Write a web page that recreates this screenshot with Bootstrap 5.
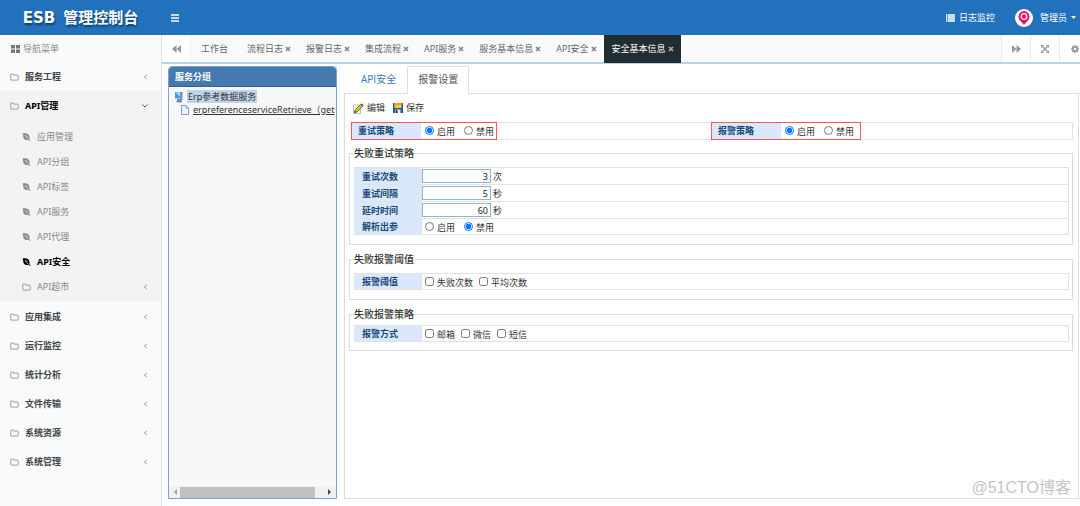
<!DOCTYPE html>
<html lang="zh-CN">
<head>
<meta charset="utf-8">
<meta name="viewport" content="width=device-width, initial-scale=1">
<title>ESB 管理控制台</title>
<link href="https://cdn.jsdelivr.net/npm/bootstrap@5.3.0/dist/css/bootstrap.min.css" rel="stylesheet">
<style>
body{font-family:"Noto Sans","Noto Sans CJK SC",sans-serif;font-size:9px;line-height:16px;color:#333;background:#fff}
a{text-decoration:none;color:inherit}
button{color:inherit}
svg{flex:none;display:block}
.topbar{height:35px;background:#2271bc;color:#fff}
.brand{width:161px;gap:8px;font-family:"DejaVu Sans","Noto Sans CJK SC",sans-serif;font-size:15px;font-weight:700;text-shadow:1px 2px 2px rgba(0,0,0,.45)}
.plain{border:0;background:none;padding:0;font-size:9px;line-height:16px}
.menu-toggle{margin-left:10px}
.user-tools{gap:20px;padding-right:4px}
.user-menu{gap:7px}
.avatar{width:18px;height:18px;background:#fff}
.sidebar{width:162px;background:#f9fafc;border-right:1px solid #dfe2ec;color:#777}
.side-title{height:27px;padding-left:11px;gap:3px;font-size:9px;color:#888}
.side-link{height:29px;padding:0 13px 0 10px;gap:6px;color:#444;font-weight:700}
.side-link.open{color:#000}
.side-link svg,.sub-link svg{color:#888}
.side-group{background:#f3f3f3;padding-bottom:3px}
.side-group ul{padding-top:4px}
.sub-link{height:25px;padding:0 13px 0 22px;gap:6px;color:#888}
.sub-link.current,.sub-link.current svg{color:#000;font-weight:700}
.page-tabs{height:29px;background:#fafafa;border-bottom:2px solid #b9d2ea;color:#777}
.square{width:29px;background:#fff;border:0;border-right:1px solid #eee;color:#999;padding:0}
.tools .square{border-right:0;border-left:1px solid #eaeaea}
.tools .square:last-child{width:21px;padding-left:11px}
.page-tab{padding:0 7px 0 8px;color:#666;gap:2px}
.page-tab.first{padding:0 11px 0 10px}
.page-tab.current{background:#222d32;color:#fff;margin-bottom:-1px}
.page-tab button{color:#888}
.page-tab.current button{color:#aaa}
.workspace{padding:2px 1px 7px 6px;gap:7px}
.tree{width:169px;border:1px solid #7fa3cc;border-radius:4px 4px 0 0;background:#f8f8f8}
.tree-head{height:20px;background:#4679ad;border-bottom:1px solid #2f6197;border-radius:3px 3px 0 0;color:#fff;font-weight:700;padding:2px 6px}
.tree-body{padding:3px 0 0 5px;font-size:9px;line-height:13px}
.tree-body span.picked{background:#bfd2ee;padding:0 1px}
.leaf-row{padding-left:7px}
.leaf-row a{text-decoration:underline;white-space:nowrap}
.scroller{height:12px;background:#f1f1f1;padding:0 4px;gap:2px}
.thumb{background:#c1c1c1;width:135px;height:11px}
.main-tabs{height:27px;border:0;font-size:10px;padding-left:6px;position:relative;font-family:"Open Sans","Noto Sans CJK SC",sans-serif}
.main-tabs .nav-link{height:27px;padding:3px 10px;margin:0;color:#337ab7;line-height:18px;border-radius:2px 2px 0 0;border:1px solid transparent;border-bottom:0}
.main-tabs .nav-link.active{border-color:#ddd;color:#555;background:#fff;height:28px;z-index:1;position:relative}
.panel-box{border:1px solid #ddd;padding:6px 5px 0 5px}
.toolrow{gap:8px;height:16px;padding-left:3px}
.toolrow button{gap:3px;font-size:9px}
.policy{border:1px solid #e2e2e2;margin:6px 0 5px 1px;height:18px}
.policy .framed{border:1px solid #f55;height:18px;margin:-1px 0 0 -1px;display:inline-flex;padding-right:2px}
.policy .framed.wide{padding-right:6px}
.name{background:#d9e8fd;color:#194877;font-weight:700}
.policy .name{width:69px;padding-left:6px}
.opts{gap:3px;padding-left:4px;display:flex;align-items:center;height:15px}
.opts label{padding-top:2px;line-height:14px}
.opts input[type=radio]+label{margin-right:6px}
.opts input[type=checkbox]+label{margin-right:3px}
.opts input{width:9px;height:9px;margin:0}
.policy .opts label:last-child{margin-right:0}
fieldset.grp{border:1px solid #ddd;padding:6px 3px 9px 4px;margin:0 0 6px -1px}
fieldset.grp.tight{padding-top:3px;padding-bottom:8px}
fieldset.grp legend{float:none;width:auto;font-size:10px;font-weight:500;line-height:16px;padding:0;margin:0;color:#333}
.frm{width:100%;border-collapse:collapse}
.frm th,.frm td{border:1px solid #e2e2e2;padding:0;height:16px;line-height:15px}
.frm th{width:67px;padding-left:7px;border-left-color:#d9e8fd}
.frm .opts{padding-left:3px}
.numline{display:flex;align-items:center;gap:2px;height:16px}
.numline input{width:69px;height:14px;border:1px solid #8fb8d0;padding:0 2px;text-align:right;font-size:9px;line-height:12px;color:#222}
.watermark{position:absolute;right:9px;bottom:8px;font:16px/20px "Liberation Sans","Noto Sans CJK SC",sans-serif;color:#c4c4c4}
</style>
</head>
<body>
<svg width="0" height="0" class="position-absolute" aria-hidden="true">
<symbol id="folder" viewBox="0 0 18 16"><path d="M1.500 13V3.200Q1.500 2 2.700 2h3.600q1.200 0 1.200 1.200v1h7.800q1.200 0 1.200 1.200V13q0 1.200-1.200 1.200H2.700Q1.500 14.200 1.500 13z" fill="none" stroke="currentColor" stroke-width="1.600"/></symbol>
<symbol id="leaf" viewBox="0 0 16 16"><path d="M0 1C5 .3 11 .8 13 4.500c1.300 2.500 1 5.500.8 8L16 15l-1 1-2.500-2C7 14.500 3 13 1.800 9 1 6 2 3.500 0 1z" fill="currentColor"/><path d="M5 4Q7 9.500 12 12.500M8.500 4.500l1 4" stroke="#f3f3f3" stroke-width="1.200" fill="none"/></symbol>
<symbol id="left" viewBox="0 0 8 12"><path d="M6 2.500 2.500 6 6 9.500" fill="none" stroke="currentColor" stroke-width="1.500"/></symbol>
<symbol id="cross" viewBox="0 0 12 12"><path d="m2 2 8 8m0-8-8 8" stroke="currentColor" stroke-width="3.400"/></symbol>
<symbol id="rewind" viewBox="0 0 16 14"><path d="M8 0v14L0 7zM16 0v14L8 7z" fill="currentColor"/></symbol>
</svg>
<div class="d-flex flex-column min-vh-100 position-relative overflow-hidden">
<header class="topbar d-flex align-items-center">
  <a href="#" class="brand d-flex justify-content-center"><span>ESB</span><span>管理控制台</span></a>
  <button class="plain menu-toggle" aria-label="菜单"><svg width="9" height="8" viewBox="0 0 9 8"><path d="M0 1h8M0 4h8M0 7h8" stroke="#fff" stroke-width="1.300"/></svg></button>
  <div class="user-tools ms-auto d-flex align-items-center">
    <a href="#" class="d-flex align-items-center gap-1"><svg width="9" height="8" viewBox="0 0 9 8"><path d="M0 1h1.500M0 3h1.500M0 5h1.500M0 7h1.500M2 1h7M2 3h7M2 5h7M2 7h7" stroke="#fff" stroke-width="1.300"/></svg><span>日志监控</span></a>
    <div class="user-menu d-flex align-items-center">
    <span class="avatar rounded-circle d-flex align-items-center justify-content-center"><svg width="12" height="14" viewBox="0 0 12 14"><path d="M6 0a5.600 5.600 0 0 1 5.600 5.600C11.600 9 8 11.500 6 14 4 11.500.4 9 .4 5.600A5.600 5.600 0 0 1 6 0z" fill="#f0136b"/><circle cx="6" cy="5.500" r="2.800" fill="none" stroke="#fff" stroke-width="1.200"/></svg></span>
    <button class="plain d-flex align-items-center text-white">管理员<svg class="ms-1" width="5" height="3" viewBox="0 0 5 3"><path d="M0 0h5L2.500 3z" fill="#fff"/></svg></button>
    </div>
  </div>
</header>
<div class="d-flex flex-grow-1">
  <nav class="sidebar flex-shrink-0">
    <div class="side-title d-flex align-items-center"><svg width="9" height="8" viewBox="0 0 9 8"><path d="M0 0h4v3.500H0zM5 0h4v3.500H5zM0 4.500h4V8H0zM5 4.500h4V8H5z" fill="#777"/></svg>导航菜单</div>
    <a href="#" class="side-link d-flex align-items-center"><svg width="9" height="8"><use href="#folder"/></svg>服务工程<svg class="ms-auto" width="5" height="8"><use href="#left"/></svg></a>
    <div class="side-group">
      <a href="#" class="side-link open d-flex align-items-center"><svg width="9" height="8"><use href="#folder"/></svg>API管理<svg class="ms-auto" width="6" height="4" viewBox="0 0 6 4"><path d="m.5.5 2.500 2.500L5.500.5" fill="none" stroke="#555"/></svg></a>
      <ul class="list-unstyled mb-0">
        <li><a href="#" class="sub-link d-flex align-items-center"><svg width="9" height="8"><use href="#leaf"/></svg>应用管理</a></li>
        <li><a href="#" class="sub-link d-flex align-items-center"><svg width="9" height="8"><use href="#leaf"/></svg>API分组</a></li>
        <li><a href="#" class="sub-link d-flex align-items-center"><svg width="9" height="8"><use href="#leaf"/></svg>API标签</a></li>
        <li><a href="#" class="sub-link d-flex align-items-center"><svg width="9" height="8"><use href="#leaf"/></svg>API服务</a></li>
        <li><a href="#" class="sub-link d-flex align-items-center"><svg width="9" height="8"><use href="#leaf"/></svg>API代理</a></li>
        <li><a href="#" class="sub-link current d-flex align-items-center"><svg width="9" height="8"><use href="#leaf"/></svg>API安全</a></li>
        <li><a href="#" class="sub-link d-flex align-items-center"><svg width="9" height="8"><use href="#folder"/></svg>API超市<svg class="ms-auto" width="5" height="8"><use href="#left"/></svg></a></li>
      </ul>
    </div>
    <a href="#" class="side-link d-flex align-items-center"><svg width="9" height="8"><use href="#folder"/></svg>应用集成<svg class="ms-auto" width="5" height="8"><use href="#left"/></svg></a>
    <a href="#" class="side-link d-flex align-items-center"><svg width="9" height="8"><use href="#folder"/></svg>运行监控<svg class="ms-auto" width="5" height="8"><use href="#left"/></svg></a>
    <a href="#" class="side-link d-flex align-items-center"><svg width="9" height="8"><use href="#folder"/></svg>统计分析<svg class="ms-auto" width="5" height="8"><use href="#left"/></svg></a>
    <a href="#" class="side-link d-flex align-items-center"><svg width="9" height="8"><use href="#folder"/></svg>文件传输<svg class="ms-auto" width="5" height="8"><use href="#left"/></svg></a>
    <a href="#" class="side-link d-flex align-items-center"><svg width="9" height="8"><use href="#folder"/></svg>系统资源<svg class="ms-auto" width="5" height="8"><use href="#left"/></svg></a>
    <a href="#" class="side-link d-flex align-items-center"><svg width="9" height="8"><use href="#folder"/></svg>系统管理<svg class="ms-auto" width="5" height="8"><use href="#left"/></svg></a>
  </nav>
  <div class="d-flex flex-column flex-fill overflow-hidden">
    <div class="page-tabs d-flex">
      <button class="square d-flex align-items-center justify-content-center" aria-label="向左"><svg width="9" height="8"><use href="#rewind"/></svg></button>
      <div class="page-tab first d-flex align-items-center"><a href="#">工作台</a></div>
      <div class="page-tab d-flex align-items-center"><a href="#">流程日志</a><button class="plain" aria-label="关闭"><svg width="6" height="6"><use href="#cross"/></svg></button></div>
      <div class="page-tab d-flex align-items-center"><a href="#">报警日志</a><button class="plain" aria-label="关闭"><svg width="6" height="6"><use href="#cross"/></svg></button></div>
      <div class="page-tab d-flex align-items-center"><a href="#">集成流程</a><button class="plain" aria-label="关闭"><svg width="6" height="6"><use href="#cross"/></svg></button></div>
      <div class="page-tab d-flex align-items-center"><a href="#">API服务</a><button class="plain" aria-label="关闭"><svg width="6" height="6"><use href="#cross"/></svg></button></div>
      <div class="page-tab d-flex align-items-center"><a href="#">服务基本信息</a><button class="plain" aria-label="关闭"><svg width="6" height="6"><use href="#cross"/></svg></button></div>
      <div class="page-tab d-flex align-items-center"><a href="#">API安全</a><button class="plain" aria-label="关闭"><svg width="6" height="6"><use href="#cross"/></svg></button></div>
      <div class="page-tab current d-flex align-items-center"><a href="#">安全基本信息</a><button class="plain" aria-label="关闭"><svg width="6" height="6"><use href="#cross"/></svg></button></div>
      <div class="tools d-flex ms-auto">
        <button class="square d-flex align-items-center justify-content-center" aria-label="向右"><svg width="9" height="8" viewBox="0 0 16 14"><path d="M8 0v14l8-7zM0 0v14l8-7z" fill="currentColor"/></svg></button>
        <button class="square d-flex align-items-center justify-content-center" aria-label="全屏"><svg width="8" height="8" viewBox="0 0 16 16"><path d="m3 3 10 10M13 3 3 13" stroke="currentColor" stroke-width="2.500"/><path d="M0 0h6L0 6zM16 0v6l-6-6zM0 16v-6l6 6zM16 16h-6l6-6z" fill="currentColor"/></svg></button>
        <button class="square d-flex align-items-center" aria-label="设置"><svg width="8" height="8" viewBox="0 0 16 16"><circle cx="8" cy="8" r="4.400" fill="none" stroke="currentColor" stroke-width="3.500"/><path d="M8 0v3M8 13v3M0 8h3M13 8h3M2.300 2.300l2 2M11.700 11.700l2 2M2.300 13.700l2-2M11.700 4.300l2-2" stroke="currentColor" stroke-width="3"/></svg></button>
      </div>
    </div>
    <div class="workspace d-flex flex-grow-1">
      <aside class="tree d-flex flex-column flex-shrink-0 overflow-hidden">
        <div class="tree-head">服务分组</div>
        <div class="tree-body flex-grow-1">
          <div class="d-flex align-items-center gap-1"><svg width="9" height="12" viewBox="0 0 9 12"><path d="M1 1h6.500v6.500H1z" fill="#4e95e0"/><path d="M1.500 1.500h4.500v4z" fill="#b9e0ff"/><path d="M7 1h1.500v8L7 10z" fill="#7b93b8"/><path d="M3 8h4v2H3zM2 10h6v1.500H3z" fill="#6f8cb8"/></svg><span class="picked">Erp参考数据服务</span></div>
          <div class="leaf-row d-flex align-items-center gap-1"><svg width="8" height="10" viewBox="0 0 8 10"><path d="M.5.5h4.500L7.500 3v6.500h-7z" fill="#eef4ff" stroke="#7d9cd0"/><path d="M5 .5V3h2.500" fill="none" stroke="#7d9cd0"/></svg><a href="#">erpreferenceserviceRetrieve（get</a></div>
        </div>
        <div class="scroller d-flex align-items-center"><svg width="5" height="6" viewBox="0 0 5 6"><path d="M4 0v6L1 3z" fill="#a3a3a3"/></svg><div class="thumb"></div><svg class="ms-auto" width="5" height="6" viewBox="0 0 5 6"><path d="M1 0v6l3-3z" fill="#444"/></svg></div>
      </aside>
      <main class="d-flex flex-column flex-fill">
        <ul class="nav nav-tabs main-tabs flex-nowrap">
          <li class="nav-item"><a class="nav-link" href="#">API安全</a></li>
          <li class="nav-item"><a class="nav-link active" href="#">报警设置</a></li>
        </ul>
        <form class="panel-box flex-grow-1">
          <div class="toolrow d-flex">
            <button type="button" class="plain d-flex align-items-center"><svg width="11" height="11" viewBox="0 0 11 11"><path d="M.5 2h7v8.500h-7z" fill="#f5f5f0" stroke="#999" stroke-width=".6"/><path d="M1.500 9.500 2 7 7.500 1.500l2 2L4 9z" fill="#c5cf2a" stroke="#554d1a" stroke-width=".8"/><path d="m7.500 1.500 1-1.200L10.800 2.300l-1.200 1.200z" fill="#d33"/><path d="M1.500 9.500 1.900 8l1.200 1.200z" fill="#222"/></svg>编辑</button>
            <button type="button" class="plain d-flex align-items-center"><svg width="10" height="10" viewBox="0 0 10 10"><path d="M0 0h10v10H0z" fill="#235b97"/><path d="M1.500 0h7v5h-7z" fill="#fc3"/><path d="M1.500 0h7v2.200h-7z" fill="#f79a1c"/><path d="M2.500 6.500h5V10h-5z" fill="#e6edf3"/><path d="M3 7h1.500v3H3z" fill="#333"/></svg>保存</button>
          </div>
          <div class="policy row g-0">
            <div class="col-6"><div class="framed"><div class="name">重试策略</div><div class="opts"><input type="radio" name="retry" id="r1" checked><label for="r1">启用</label><input type="radio" name="retry" id="r2"><label for="r2">禁用</label></div></div></div>
            <div class="col-6"><div class="framed wide"><div class="name">报警策略</div><div class="opts"><input type="radio" name="alarm" id="a1" checked><label for="a1">启用</label><input type="radio" name="alarm" id="a2"><label for="a2">禁用</label></div></div></div>
          </div>
          <fieldset class="grp">
            <legend>失败重试策略</legend>
            <table class="frm">
              <tr><th class="name"><label for="n1">重试次数</label></th><td><div class="numline"><input id="n1" value="3">次</div></td></tr>
              <tr><th class="name"><label for="n2">重试间隔</label></th><td><div class="numline"><input id="n2" value="5">秒</div></td></tr>
              <tr><th class="name"><label for="n3">延时时间</label></th><td><div class="numline"><input id="n3" value="60">秒</div></td></tr>
              <tr><th class="name">解析出参</th><td><div class="opts"><input type="radio" name="parse" id="p1"><label for="p1">启用</label><input type="radio" name="parse" id="p2" checked><label for="p2">禁用</label></div></td></tr>
            </table>
          </fieldset>
          <fieldset class="grp">
            <legend>失败报警阈值</legend>
            <table class="frm"><tr><th class="name">报警阈值</th><td><div class="opts"><input type="checkbox" id="c1"><label for="c1">失败次数</label><input type="checkbox" id="c2"><label for="c2">平均次数</label></div></td></tr></table>
          </fieldset>
          <fieldset class="grp tight">
            <legend>失败报警策略</legend>
            <table class="frm"><tr><th class="name">报警方式</th><td><div class="opts"><input type="checkbox" id="w1"><label for="w1">邮箱</label><input type="checkbox" id="w2"><label for="w2">微信</label><input type="checkbox" id="w3"><label for="w3">短信</label></div></td></tr></table>
          </fieldset>
        </form>
      </main>
    </div>
  </div>
</div>
<div class="watermark">@51CTO博客</div>
</div>
<script src="https://cdn.jsdelivr.net/npm/bootstrap@5.3.0/dist/js/bootstrap.bundle.min.js"></script>
</body>
</html>
